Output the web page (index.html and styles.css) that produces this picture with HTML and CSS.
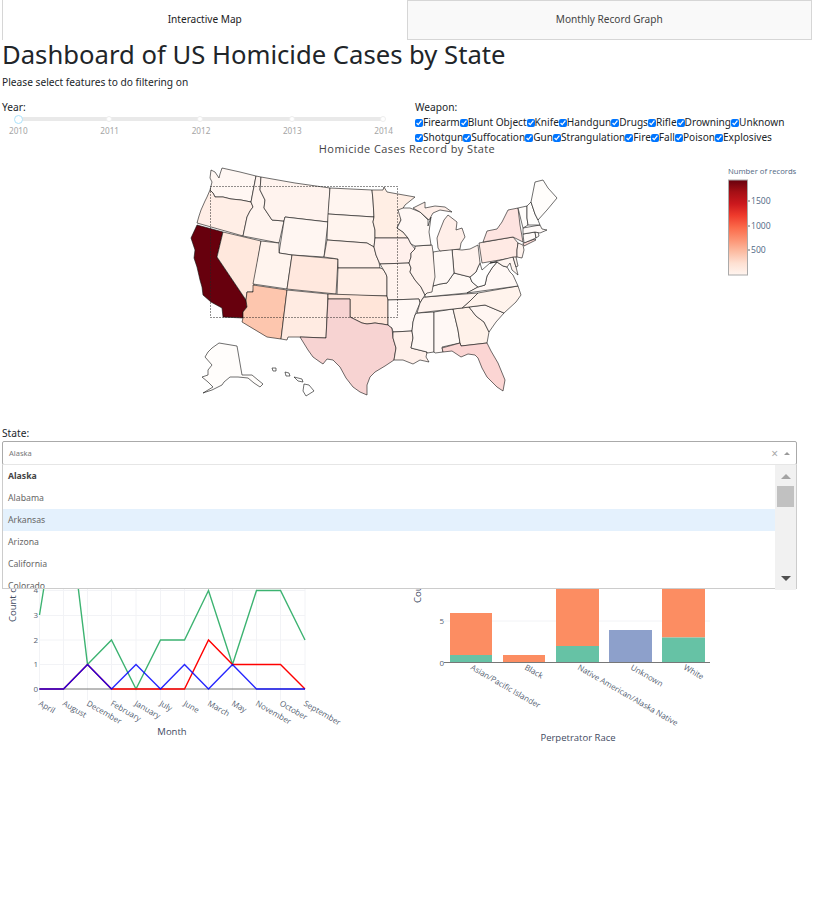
FILE: index.html
```html
<!DOCTYPE html>
<html lang="en">
<head>
  <meta charset="UTF-8">
  <title>Dashboard of US Homicide Cases by State</title>
  <link rel="stylesheet" href="styles.css">
</head>
<body>

  <div class="tabs">
    <div class="tab tab-active">Interactive Map</div>
    <div class="tab">Monthly Record Graph</div>
  </div>

  <h1>Dashboard of US Homicide Cases by State</h1>
  <p class="intro">Please select features to do filtering on</p>

  <div class="filters">
    <div class="year-filter">
      <label class="filter-label">Year:</label>
      <div class="rail">
        <span class="dot"></span><span class="dot"></span><span class="dot"></span><span class="dot"></span>
        <span class="handle"></span>
      </div>
      <div class="rail-labels">
        <span>2010</span><span>2011</span><span>2012</span><span>2013</span><span>2014</span>
      </div>
    </div>
    <div class="weapon-filter">
      <label class="filter-label">Weapon:</label>
      <div class="checks">
        <label><input type="checkbox" checked>Firearm</label>
        <label><input type="checkbox" checked>Blunt Object</label>
        <label><input type="checkbox" checked>Knife</label>
        <label><input type="checkbox" checked>Handgun</label>
        <label><input type="checkbox" checked>Drugs</label>
        <label><input type="checkbox" checked>Rifle</label>
        <label><input type="checkbox" checked>Drowning</label>
        <label><input type="checkbox" checked>Unknown</label>
        <label><input type="checkbox" checked>Shotgun</label>
        <label><input type="checkbox" checked>Suffocation</label>
        <label><input type="checkbox" checked>Gun</label>
        <label><input type="checkbox" checked>Strangulation</label>
        <label><input type="checkbox" checked>Fire</label>
        <label><input type="checkbox" checked>Fall</label>
        <label><input type="checkbox" checked>Poison</label>
        <label><input type="checkbox" checked>Explosives</label>
      </div>
    </div>
  </div>

  <svg class="map" viewBox="2 143 810 283" width="810" height="283">
    <defs>
      <linearGradient id="reds" x1="0" y1="1" x2="0" y2="0">
        <stop offset="0" stop-color="#fff5f0"/>
        <stop offset="0.125" stop-color="#fee0d2"/>
        <stop offset="0.25" stop-color="#fcbba1"/>
        <stop offset="0.375" stop-color="#fc9272"/>
        <stop offset="0.5" stop-color="#fb6a4a"/>
        <stop offset="0.625" stop-color="#ef3b2c"/>
        <stop offset="0.75" stop-color="#cb181d"/>
        <stop offset="0.875" stop-color="#a50f15"/>
        <stop offset="1" stop-color="#67000d"/>
      </linearGradient>
    </defs>
    <text class="map-title" x="407" y="153" text-anchor="middle">Homicide Cases Record by State</text>

    <g class="states">
      <!-- west -->
      <polygon fill="#fff7f3" points="211,170 215,172 217,175 219,178 220,174 222,168 240,172 256,176 251,202 241,200 231,199 223,197 215,197 213,193 210,190 212,182 210,178"/>
      <polygon fill="#ffeee6" points="210,190 213,193 215,197 223,197 231,199 241,200 251,202 253,207 250,211 247,217 243,236 197,223 199,216 201,210 205,201 207,197"/>
      <polygon fill="#67000d" points="197,225 223,232 217,257 246,300 247,307 243,312 243,318 223,317 222,308 211,302 203,295 202,287 200,280 197,267 194,258 195,250 191,238"/>
      <polygon fill="#ffe8dd" points="223,232 261,241 253,292 247,292 246,300 217,257"/>
      <polygon fill="#fff4ef" points="256,176 261,177 260,190 265,200 264,208 268,214 272,220 284,221 279,243 243,236 247,217 250,211 253,207 251,202"/>
      <polygon fill="#fff3ee" points="261,177 295,183 330,188 328,222 285,217 284,221 272,220 268,214 264,208 265,200 260,190"/>
      <polygon fill="#fff6f2" points="285,217 328,222 324,257 292,255 279,253 284,221"/>
      <polygon fill="#fff4ee" points="261,241 279,243 279,253 292,255 287,289 253,284"/>
      <polygon fill="#ffe8de" points="292,255 338,259 336,294 287,289"/>
      <polygon fill="#fdc6ae" points="253,285 287,290 281,339 267,337 242,322 243,318 243,312 247,307 246,300 247,292 253,292"/>
      <polygon fill="#ffebe2" points="287,290 328,294 326,338 300,337 288,337 287,340 281,339"/>
      <!-- plains -->
      <polygon fill="#fff5f0" points="330,188 372,190 373,200 374,217 328,214"/>
      <polygon fill="#fff4ee" points="328,214 374,217 373,222 375,230 375,238 374,247 367,243 327,240"/>
      <polygon fill="#fff0ea" points="327,240 367,243 374,247 376,255 379,262 380,268 338,268 338,259 324,257"/>
      <polygon fill="#ffeee6" points="338,268 380,268 383,269 386,274 387,277 387,296 337,295"/>
      <polygon fill="#ffe5d9" points="328,294 387,296 388,300 388,325 382,324 375,323 367,324 362,323 356,320 350,317 350,299 328,299"/>
      <polygon fill="#f7d3d2" points="328,299 350,299 350,317 356,320 362,323 367,324 375,323 382,324 388,325 392,328 393,338 396,348 394,360 385,366 375,372 370,377 367,385 367,395 360,392 353,387 346,378 340,367 333,360 327,359 323,364 320,362 313,357 308,350 300,337 326,338"/>
      <!-- midwest -->
      <polygon fill="#ffeee4" points="372,190 383,190 384,187 387,192 398,194 415,197 405,205 402,210 401,220 397,228 403,232 408,238 375,238 375,230 373,222 374,217 373,200"/>
      <polygon fill="#fff0ec" points="375,238 408,238 411,244 415,249 411,253 411,257 409,263 380,264 379,262 376,255 374,247"/>
      <polygon fill="#fff3ee" points="380,264 409,263 411,268 410,272 415,280 421,287 425,295 423,298 420,303 419,299 388,300 387,296 387,277 386,274 383,269"/>
      <polygon fill="#fff8f5" points="388,300 419,299 420,303 417,310 415,315 413,322 412,331 393,332 392,328 388,325"/>
      <polygon fill="#fff0ea" points="393,332 412,331 413,338 411,348 427,352 426,357 429,362 420,360 413,364 403,360 394,360 396,348 393,338"/>
      <polygon fill="#fff8f5" points="417,313 434,312 434,352 427,353 427,352 411,348 413,338 412,331 413,322 415,315"/>
      <polygon fill="#fff8f5" points="434,312 453,309 458,330 460,343 442,347 443,352 435,353 434,352"/>
      <polygon fill="#fff2ea" points="453,309 469,307 476,316 484,322 489,332 487,343 461,346 460,343 458,330"/>
      <polygon fill="#fbd5d3" points="442,348 460,343 461,346 487,343 491,351 498,363 505,380 503,391 497,387 487,377 482,368 478,358 475,355 468,354 461,357 452,351 443,352"/>
      <!-- south east -->
      <polygon fill="#fff6f2" points="469,307 485,305 504,313 496,322 489,332 484,322 476,316"/>
      <polygon fill="#fff3ec" points="462,308 470,301 478,293 518,286 521,295 516,302 504,313 485,305 469,307"/>
      <polygon fill="#fff3ee" points="420,303 423,298 425,297 478,293 470,301 462,308 417,313"/>
      <polygon fill="#fff8f4" points="425,295 427,293 433,286 440,284 447,283 454,273 462,275 470,277 472,282 478,287 467,293 425,297"/>
      <polygon fill="#fff8f5" points="467,293 478,287 485,285 487,276 492,268 497,262 503,266 507,267 510,272 513,275 518,286"/>
      <polygon fill="#fffefd" points="470,277 476,272 478,267 480,263 482,270 490,263 497,262 492,268 487,276 485,285 478,287 472,282"/>
      <polygon fill="#fff3ee" points="452,249 462,250 470,249 478,245 480,263 478,267 476,272 470,277 462,275 454,273"/>
      <polygon fill="#fff8f5" points="433,252 452,249 454,273 447,283 440,284 433,286"/>
      <polygon fill="#fff3ee" points="415,246 432,245 433,252 435,277 433,286 432,292 427,293 425,295 421,287 415,280 410,272 411,268 409,263 411,257 411,253 415,249"/>
      <polygon fill="#fff8f5" points="398,210 403,208 410,208 420,212 428,220 428,226 431,217 429,232 431,245 415,246 411,244 408,238 403,232 397,228 401,220"/>
      <polygon fill="#ffefe9" points="438,248 437,238 440,230 444,220 448,215 457,222 456,230 462,228 465,237 461,243 460,249 440,251"/>
      <polygon fill="#ffefe9" points="413,208 425,202 425,208 435,206 445,207 452,212 440,210 433,213 429,220 420,212"/>
      <!-- north east -->
      <polygon fill="#ffeae4" points="479,243 513,237 518,243 517,250 517,257 482,263"/>
      <polygon fill="#fde3e0" points="483,242 487,231 497,229 502,222 508,210 518,208 520,225 523,242 513,237"/>
      <polygon fill="#fbd9d5" points="523,243 535,239 536,240 524,246"/>
      <polygon fill="#fff3ee" points="518,243 523,245 524,250 522,258 517,257 517,250"/>
      <polygon fill="#fff5f0" points="490,263 513,257 516,267 518,275 512,270 510,263 507,267 503,266 497,262"/>
      <polygon fill="#fff5f0" points="513,257 516,257 518,266 516,267"/>
      <polygon fill="#fffaf8" points="523,234 535,232 536,238 524,243"/>
      <polygon fill="#fffaf8" points="535,232 538,232 539,236 536,238"/>
      <polygon fill="#fffaf8" points="523,228 540,225 542,229 547,230 540,233 535,232 523,234"/>
      <polygon fill="#fffdfb" points="518,208 527,206 527,218 528,225 523,228"/>
      <polygon fill="#fffdfb" points="527,206 531,202 535,214 538,220 540,225 528,225 527,218"/>
      <polygon fill="#fffdfb" points="531,202 535,182 543,180 548,188 557,198 547,210 538,220 535,214"/>
      <!-- alaska, hawaii -->
      <polygon fill="#fffdfb" points="219,343 237,346 242,375 252,375 258,380 263,384 260,387 254,383 248,378 238,377 230,377 224,382 222,385 212,390 203,393 213,387 208,382 202,377 208,375 208,370 212,365 205,357 208,352 212,348"/>
      <polygon fill="#fff" points="272,368 276,368 276,371 273,371"/>
      <polygon fill="#fff" points="285,372 289,373 290,376 286,376"/>
      <polygon fill="#fff" points="294,377 302,379 303,382 298,381"/>
      <polygon fill="#fff" points="304,384 309,385 314,391 306,396 303,391"/>
    </g>
    <rect class="selection" x="210.5" y="186.5" width="187" height="131"/>

    <text class="legend-title" x="728" y="174">Number of records</text>
    <rect class="legend-bar" x="728.5" y="180" width="19" height="95" fill="url(#reds)"/>
    <g class="legend-ticks">
      <line x1="748" y1="201" x2="750" y2="201"/>
      <line x1="748" y1="226" x2="750" y2="226"/>
      <line x1="748" y1="250" x2="750" y2="250"/>
    </g>
    <text class="legend-label" x="751" y="204">1500</text>
    <text class="legend-label" x="751" y="229">1000</text>
    <text class="legend-label" x="751" y="253">500</text>
  </svg>

  <div class="state-filter">
    <label class="filter-label">State:</label>
    <div class="select">
      <div class="select-box">
        <span class="select-value">Alaska</span>
        <span class="select-clear">×</span>
        <span class="select-arrow"></span>
      </div>
      <div class="menu">
        <div class="menu-options">
          <div class="option option-selected">Alaska</div>
          <div class="option">Alabama</div>
          <div class="option option-focused">Arkansas</div>
          <div class="option">Arizona</div>
          <div class="option">California</div>
          <div class="option">Colorado</div>
        </div>
        <div class="scrollbar">
          <span class="scroll-up"></span>
          <span class="scroll-thumb"></span>
          <span class="scroll-down"></span>
        </div>
      </div>
    </div>
  </div>

  <div class="charts">
    <svg class="chart" viewBox="2 465 406 290" width="406" height="290">
      <g class="grid">
        <line x1="39.5" y1="470" x2="39.5" y2="700"/><line x1="63.5" y1="470" x2="63.5" y2="700"/>
        <line x1="87.5" y1="470" x2="87.5" y2="700"/><line x1="111.5" y1="470" x2="111.5" y2="700"/>
        <line x1="136" y1="470" x2="136" y2="700"/><line x1="160.5" y1="470" x2="160.5" y2="700"/>
        <line x1="184.5" y1="470" x2="184.5" y2="700"/><line x1="208.5" y1="470" x2="208.5" y2="700"/>
        <line x1="232.5" y1="470" x2="232.5" y2="700"/><line x1="256.5" y1="470" x2="256.5" y2="700"/>
        <line x1="280.5" y1="470" x2="280.5" y2="700"/><line x1="305" y1="470" x2="305" y2="700"/>
        <line x1="39" y1="590.5" x2="305" y2="590.5"/><line x1="39" y1="615.5" x2="305" y2="615.5"/>
        <line x1="39" y1="640" x2="305" y2="640"/><line x1="39" y1="664.5" x2="305" y2="664.5"/>
      </g>
      <line class="zero" x1="39" y1="689" x2="305" y2="689"/>
      <polyline class="line line-green" points="39.5,615 63.5,466 87.5,664.5 111.5,640 136,689 160.5,640 184.5,640 208.5,590.5 232.5,664.5 256.5,590.5 280.5,590.5 305,640"/>
      <polyline class="line line-red" points="39.5,689 63.5,689 87.5,664.5 111.5,689 136,689 160.5,689 184.5,689 208.5,640 232.5,664.5 256.5,664.5 280.5,664.5 305,689"/>
      <polyline class="line line-blue" points="39.5,689 63.5,689 87.5,664.5 111.5,689 136,664.5 160.5,689 184.5,664.5 208.5,689 232.5,664.5 256.5,689 280.5,689 305,689"/>
      <g class="tick-y" text-anchor="end">
        <text x="38" y="593">4</text><text x="38" y="618">3</text><text x="38" y="643">2</text>
        <text x="38" y="667">1</text><text x="38" y="692">0</text>
      </g>
      <g class="tick-x">
        <text transform="translate(38 705) rotate(30)">April</text>
        <text transform="translate(62 705) rotate(30)">August</text>
        <text transform="translate(86 705) rotate(30)">December</text>
        <text transform="translate(110 705) rotate(30)">February</text>
        <text transform="translate(134 705) rotate(30)">January</text>
        <text transform="translate(159 705) rotate(30)">July</text>
        <text transform="translate(183 705) rotate(30)">June</text>
        <text transform="translate(207 705) rotate(30)">March</text>
        <text transform="translate(231 705) rotate(30)">May</text>
        <text transform="translate(255 705) rotate(30)">November</text>
        <text transform="translate(279 705) rotate(30)">October</text>
        <text transform="translate(303 705) rotate(30)">September</text>
      </g>
      <text class="axis-title" x="172" y="735" text-anchor="middle">Month</text>
      <text class="axis-title" transform="translate(16 622) rotate(-90)">Count of Records</text>
    </svg>

    <svg class="chart" viewBox="408 465 404 290" width="404" height="290">
      <line class="grid-line" x1="444" y1="621" x2="710" y2="621"/>
      <rect x="450" y="613" width="42" height="42" fill="#fc8d62"/>
      <rect x="450" y="655" width="42" height="7.5" fill="#66c2a5"/>
      <rect x="503" y="655" width="42" height="7.5" fill="#fc8d62"/>
      <rect x="556" y="540" width="43" height="106" fill="#fc8d62"/>
      <rect x="556" y="646" width="43" height="16.5" fill="#66c2a5"/>
      <rect x="609" y="630" width="43" height="32.5" fill="#8da0cb"/>
      <rect x="662" y="540" width="43" height="97.5" fill="#fc8d62"/>
      <rect x="662" y="637.5" width="43" height="25" fill="#66c2a5"/>
      <line class="zero" x1="444" y1="662.5" x2="710" y2="662.5"/>
      <g class="tick-y" text-anchor="end">
        <text x="444" y="624">5</text><text x="444" y="666">0</text>
      </g>
      <g class="tick-x">
        <text transform="translate(470 669) rotate(30)">Asian/Pacific Islander</text>
        <text transform="translate(524 669) rotate(30)">Black</text>
        <text transform="translate(577 669) rotate(30)">Native American/Alaska Native</text>
        <text transform="translate(630 669) rotate(30)">Unknown</text>
        <text transform="translate(683 669) rotate(30)">White</text>
      </g>
      <text class="axis-title" x="578" y="741" text-anchor="middle">Perpetrator Race</text>
      <text class="axis-title" transform="translate(421 603) rotate(-90)">Count of Records</text>
    </svg>
  </div>

</body>
</html>
```

FILE: styles.css
```css
* {
  box-sizing: border-box;
}

body {
  margin: 0;
  padding: 0 4px 0 2px;
  background-color: #fff;
  color: #212529;
  font-family: "Noto Sans", "Open Sans", sans-serif;
  font-size: 10.2px;
  line-height: 15px;
}

.tabs {
  display: flex;
  height: 40px;
}

.tab {
  flex: 1;
  display: flex;
  align-items: center;
  justify-content: center;
  padding-bottom: 1px;
  background-color: #f9f9f9;
  border: 1px solid #d6d6d6;
  color: #444;
  font-size: 10.1px;
}

.tab-active {
  background-color: #fff;
  border-top: none;
  border-bottom: none;
  border-right: none;
  color: #222;
}

h1 {
  margin: 1px 0 0;
  font-size: 25.65px;
  font-weight: 400;
  line-height: 28px;
}

.intro {
  margin: 6px 0 0;
  line-height: 15px;
}

.filters {
  display: flex;
  margin-top: 10px;
  height: 43px;
}

.year-filter {
  width: 413px;
}

.weapon-filter {
  flex: 1;
}

.filter-label {
  display: block;
}

.rail {
  position: relative;
  width: 367px;
  height: 4px;
  margin: 2px 0 0 15px;
  background-color: #e9e9e9;
  border-radius: 2px;
}

.dot {
  position: absolute;
  top: -1px;
  width: 6px;
  height: 6px;
  background-color: #fff;
  border: 1px solid #eee;
  border-radius: 50%;
}

.dot:nth-child(1) { left: 89px; }
.dot:nth-child(2) { left: 180px; }
.dot:nth-child(3) { left: 272px; }
.dot:nth-child(4) { left: 363px; }

.handle {
  position: absolute;
  top: -2.5px;
  left: -3.5px;
  width: 9px;
  height: 9px;
  background-color: #fff;
  border: 1px solid #abe2fb;
  border-radius: 50%;
}

.rail-labels {
  display: flex;
  justify-content: space-between;
  width: 384px;
  margin: 4px 0 0 7px;
  color: #a5a5a5;
  font-size: 8.2px;
  line-height: 12px;
}

.checks {
  display: flex;
  flex-wrap: wrap;
  width: 385px;
  font-size: 10.1px;
}

.checks label {
  display: flex;
  align-items: center;
  height: 15px;
}

.checks input {
  width: 8px;
  height: 8px;
  margin: 0;
  accent-color: #0075ff;
}

.map {
  display: block;
}

.map-title {
  fill: #444;
  font-family: "Open Sans", sans-serif;
  font-size: 11px;
  letter-spacing: 0.4px;
}

.states polygon {
  stroke: #111;
  stroke-opacity: 0.6;
  stroke-width: 1;
  stroke-linejoin: round;
}

.selection {
  fill: none;
  stroke: #222;
  stroke-dasharray: 1 2;
  stroke-width: 1;
}

.legend-title {
  fill: #506784;
  font-family: "Open Sans", sans-serif;
  font-size: 7.7px;
}

.legend-bar {
  stroke: #aaa;
  stroke-width: 1;
}

.legend-ticks line {
  stroke: #666;
  stroke-width: 1;
}

.legend-label {
  fill: #506784;
  font-family: "Open Sans", sans-serif;
  font-size: 8.6px;
}

.state-filter {
  position: relative;
}

.state-filter .filter-label {
  height: 15px;
}

.select {
  position: relative;
  width: 795px;
}

.select-box {
  display: flex;
  align-items: center;
  height: 24px;
  padding: 0 6px;
  border: 1px solid #aaa;
  border-radius: 2px;
  background-color: #fff;
}

.select-value {
  flex: 1;
  color: #777;
  font-size: 7.5px;
}

.select-clear {
  margin-right: 6px;
  color: #aaa;
  font-size: 12px;
}

.select-arrow {
  width: 0;
  height: 0;
  border-left: 3px solid transparent;
  border-right: 3px solid transparent;
  border-bottom: 3px solid #999;
}

.menu {
  position: absolute;
  z-index: 5;
  top: 23px;
  left: 0;
  display: flex;
  width: 795px;
  height: 125px;
  background-color: #fff;
  border: 1px solid #ccc;
  border-top-color: #e6e6e6;
}

.menu-options {
  flex: 1;
  height: 123px;
  overflow: hidden;
}

.option {
  height: 22px;
  padding: 0 5px;
  color: #666;
  font-size: 8.7px;
  line-height: 22px;
}

.option-selected {
  color: #444;
  font-weight: 700;
}

.option-focused {
  background-color: #e4f1fd;
}

.scrollbar {
  position: relative;
  width: 21px;
  height: 125px;
  background-color: #f1f1f1;
}

.scroll-up,
.scroll-down {
  position: absolute;
  left: 6px;
  width: 0;
  height: 0;
  border-left: 5px solid transparent;
  border-right: 5px solid transparent;
}

.scroll-up {
  top: 9px;
  border-bottom: 5px solid #a3a3a3;
}

.scroll-down {
  top: 111px;
  border-top: 5px solid #505050;
}

.scroll-thumb {
  position: absolute;
  top: 21px;
  left: 2px;
  width: 17px;
  height: 21px;
  background-color: #c1c1c1;
}

.charts {
  display: flex;
}

.chart {
  display: block;
}

.grid line,
.grid-line {
  stroke: #f2f3f6;
  stroke-width: 1;
}

.zero {
  stroke: #777;
  stroke-width: 1;
}

.line {
  fill: none;
  stroke-width: 1.4;
}

.line-green { stroke: #3cb371; }
.line-red { stroke: #f00; }
.line-blue { stroke: #00f; stroke-opacity: 0.85; }

.tick-x,
.tick-y {
  fill: #565f73;
  font-family: "Open Sans", sans-serif;
  font-size: 8px;
}

.axis-title {
  fill: #3f4a5f;
  font-family: "Open Sans", sans-serif;
  font-size: 9.5px;
}
```
